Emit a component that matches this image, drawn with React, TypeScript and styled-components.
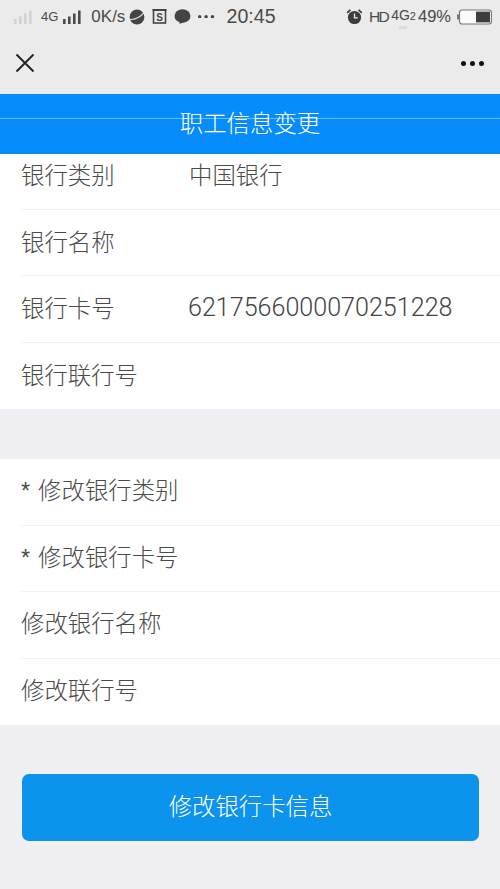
import React from "react";
import styled, { createGlobalStyle } from "styled-components";

const GlobalStyle = createGlobalStyle`
  html, body {
    margin: 0;
    padding: 0;
    background: #efeff4;
    font-family: "Liberation Sans", "Noto Sans CJK SC", sans-serif;
  }
  * {
    box-sizing: border-box;
  }
`;

const Page = styled.div`
  width: 500px;
  height: 889px;
  overflow: hidden;
  background: #efeff4;
  display: flex;
  flex-direction: column;
`;

const Chrome = styled.div`
  height: 94px;
  background: #ebebeb;
  display: flex;
  flex-direction: column;
`;

const StatusBar = styled.div`
  height: 35px;
  padding: 0 8px 2px 13px;
  display: flex;
  align-items: center;
  color: #4a4a4a;
  font-size: 17px;
`;

const StatusGroup = styled.div<{ $gap?: number; $left?: number }>`
  display: flex;
  align-items: center;
  gap: ${(p) => p.$gap ?? 4}px;
  margin-left: ${(p) => p.$left ?? 0}px;
`;

const Spacer = styled.div`
  flex: 1;
`;

const Small = styled.span`
  font-size: 13px;
`;

const Clock = styled.span`
  font-size: 19.6px;
  margin-left: 12px;
`;

const Hd = styled.span`
  font-size: 15.5px;
  letter-spacing: -1.6px;
  margin-left: 6px;
`;

const Network = styled.span`
  position: relative;
  font-size: 14px;
  margin: -4px 2px 0 3px;

  sub {
    font-size: 11px;
    vertical-align: baseline;
  }

  &::after {
    content: "";
    position: absolute;
    left: 8px;
    top: 19px;
    width: 8px;
    height: 3px;
    background: #dcdcdc;
  }
`;

const Percent = styled.span`
  font-size: 16.5px;
  margin-right: 6px;
`;

const NavBar = styled.div`
  flex: 1;
  padding: 0 16px 3px 15px;
  display: flex;
  align-items: center;
  justify-content: space-between;
`;

const TitleBar = styled.header`
  position: relative;
  height: 60px;
  background: #078dfb;
  color: #fff;
  font-size: 23.4px;
  font-weight: 300;
  display: flex;
  justify-content: center;
  padding-top: 14px;
  line-height: 33px;

  &::before {
    content: "";
    position: absolute;
    left: 0;
    right: 0;
    top: 24px;
    height: 1px;
    background: #6cbcfb;
  }
`;

const TitleText = styled.span`
  position: relative;
`;

const List = styled.section<{ $gapAfter?: number }>`
  background: #fff;
  margin-bottom: ${(p) => p.$gapAfter ?? 0}px;
`;

const Row = styled.div<{ $height: number; $shift?: number }>`
  height: ${(p) => p.$height}px;
  margin-left: 21px;
  display: flex;
  align-items: center;
  padding-bottom: ${(p) => p.$shift ?? 0}px;
  color: #4a4a4a;
  font-size: 23.4px;
  font-weight: 300;
  border-bottom: 1px solid #f1f1f1;

  &:last-child {
    border-bottom: 0;
  }
`;

const Label = styled.span`
  width: 168px;
  flex: none;
  word-spacing: 1.5px;
`;

const Value = styled.span`
  color: #4a4a4a;
`;

const CardNumber = styled.span`
  font-family: Roboto, "Liberation Sans", sans-serif;
  font-size: 25.1px;
  font-weight: 300;
  margin-left: -1px;
  color: #444;
`;

const SubmitWrap = styled.div`
  padding: 0 21px 0 22px;
`;

const SubmitButton = styled.button`
  width: 100%;
  height: 67px;
  border: 0;
  border-radius: 7px;
  padding: 0 0 6px;
  background: #0c93ee;
  color: #fff;
  font: inherit;
  font-size: 23.4px;
  font-weight: 300;
`;

const SignalBars = ({ colour }: { colour: string }) => (
  <svg width="21" height="16" viewBox="0 0 21 16">
    <rect x="1" y="10" width="2.6" height="5" fill={colour} />
    <rect x="6" y="7.5" width="2.6" height="7.5" fill={colour} />
    <rect x="11" y="4.5" width="2.6" height="10.5" fill={colour} />
    <rect x="16" y="1.5" width="2.6" height="13.5" fill={colour} />
  </svg>
);

const Planet = () => (
  <svg width="16" height="16" viewBox="0 0 16 16">
    <circle cx="8" cy="8" r="7.4" fill="#444" />
    <path d="M1 10.5C6 10.5 11.5 8 15 3.6" stroke="#ddd" strokeWidth="1.2" fill="none" />
  </svg>
);

const SBox = () => (
  <svg width="15" height="15" viewBox="0 0 15 15">
    <path d="M0.5 1H14.5" stroke="#444" strokeWidth="2" />
    <rect x="1.5" y="1" width="12" height="13" fill="none" stroke="#444" strokeWidth="1.6" />
    <text x="7.5" y="11.5" textAnchor="middle" fontSize="10" fontWeight="700" fill="#444" fontFamily="Liberation Sans">
      S
    </text>
  </svg>
);

const Bubble = () => (
  <svg width="17" height="15" viewBox="0 0 17 15">
    <ellipse cx="8.5" cy="7" rx="8" ry="6.8" fill="#444" />
    <path d="M6 12L5.5 15L10 13Z" fill="#444" />
  </svg>
);

const Dots = ({ size, gap, colour }: { size: number; gap: number; colour: string }) => (
  <svg width={size * 3 + gap * 2} height={size} viewBox={`0 0 ${size * 3 + gap * 2} ${size}`}>
    {[0, 1, 2].map((i) => (
      <circle key={i} cx={size / 2 + i * (size + gap)} cy={size / 2} r={size / 2} fill={colour} />
    ))}
  </svg>
);

const AlarmClock = () => (
  <svg width="17" height="17" viewBox="0 0 17 17">
    <circle cx="8.5" cy="9.5" r="6.6" fill="#3c3c3c" />
    <path d="M8.5 5.5V9.8H11.8" stroke="#eee" strokeWidth="1.3" fill="none" />
    <path d="M0.6 4.2L3.8 1.2L5 2.4L1.8 5.4Z M16.4 4.2L13.2 1.2L12 2.4L15.2 5.4Z" fill="#3c3c3c" />
  </svg>
);

const Battery = () => (
  <svg width="35" height="16" viewBox="0 0 35 16">
    <rect x="0" y="5.5" width="2" height="5" fill="#777" />
    <rect x="2.5" y="1" width="32" height="14" rx="2.5" fill="#fafafa" stroke="#777" strokeWidth="1.2" />
    <rect x="19" y="2.6" width="14" height="10.8" fill="#3d3d3d" />
  </svg>
);

const CloseIcon = () => (
  <svg width="20" height="20" viewBox="0 0 20 20">
    <path d="M1.5 1.5L18.5 18.5M18.5 1.5L1.5 18.5" stroke="#222" strokeWidth="1.9" />
  </svg>
);

const bankRows = [
  { label: "银行名称" },
  { label: "银行卡号", number: "6217566000070251228" },
  { label: "银行联行号" },
];

const editRows = ["* 修改银行类别", "* 修改银行卡号", "修改银行名称", "修改联行号"];

const App = () => (
  <Page>
    <GlobalStyle />
    <Chrome>
      <StatusBar>
        <SignalBars colour="#d2d2d2" />
        <StatusGroup $left={7} $gap={4}>
          <Small>4G</Small>
          <SignalBars colour="#4a4a4a" />
        </StatusGroup>
        <StatusGroup $left={8}>
          <span>0K/s</span>
        </StatusGroup>
        <StatusGroup $left={4} $gap={7}>
          <Planet />
          <SBox />
          <Bubble />
          <Dots size={3.4} gap={3} colour="#444" />
        </StatusGroup>
        <Clock>20:45</Clock>
        <Spacer />
        <AlarmClock />
        <Hd>HD</Hd>
        <Network>
          4G<sub>2</sub>
        </Network>
        <Percent>49%</Percent>
        <Battery />
      </StatusBar>
      <NavBar>
        <CloseIcon />
        <Dots size={5} gap={4} colour="#111" />
      </NavBar>
    </Chrome>
    <TitleBar>
      <TitleText>职工信息变更</TitleText>
    </TitleBar>
    <List $gapAfter={50}>
      <Row $height={55.5} $shift={15}>
        <Label>银行类别</Label>
        <Value>中国银行</Value>
      </Row>
      {bankRows.map((row) => (
        <Row key={row.label} $height={66.5} $shift={3}>
          <Label>{row.label}</Label>
          {row.number && <CardNumber>{row.number}</CardNumber>}
        </Row>
      ))}
    </List>
    <List $gapAfter={49}>
      {editRows.map((label) => (
        <Row key={label} $height={66.5} $shift={5}>
          <Label>{label}</Label>
        </Row>
      ))}
    </List>
    <SubmitWrap>
      <SubmitButton>修改银行卡信息</SubmitButton>
    </SubmitWrap>
  </Page>
);

export default App;
